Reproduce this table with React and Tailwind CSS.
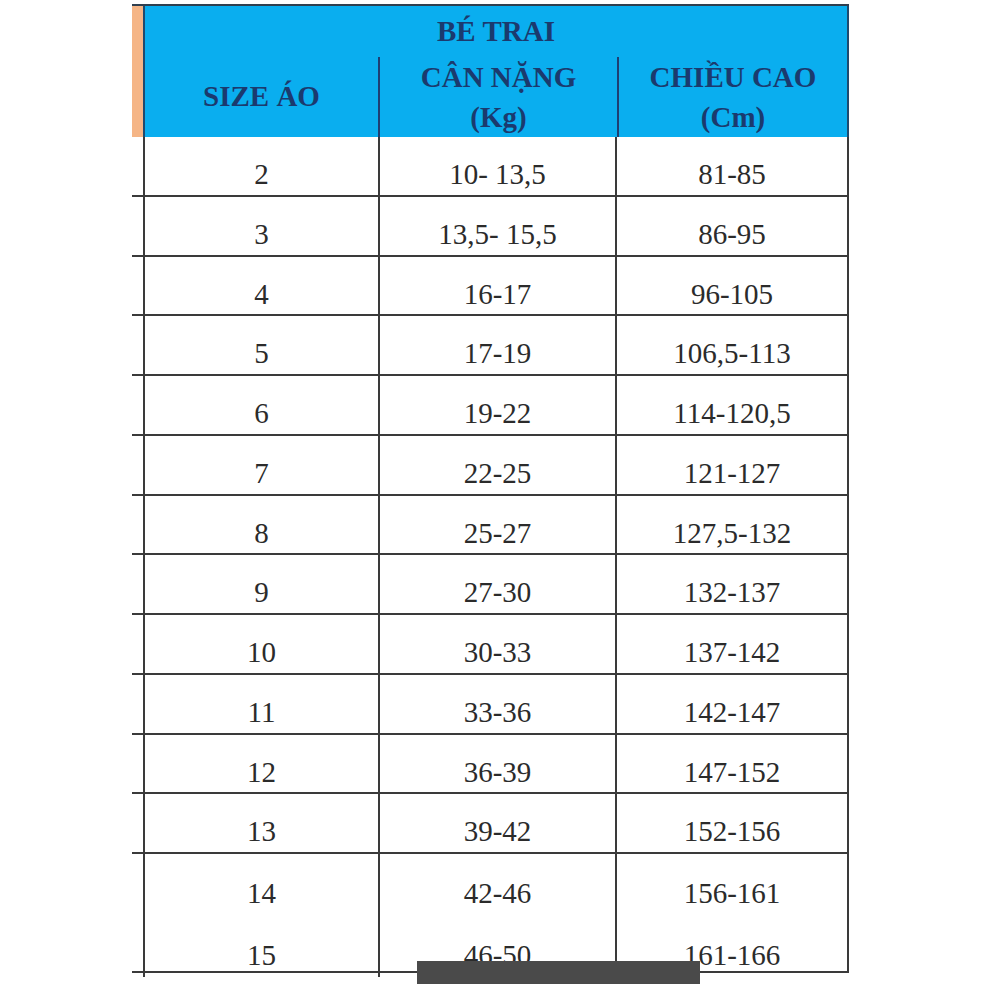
import React from 'react';

const rows = [
  ['2', '10- 13,5', '81-85'],
  ['3', '13,5- 15,5', '86-95'],
  ['4', '16-17', '96-105'],
  ['5', '17-19', '106,5-113'],
  ['6', '19-22', '114-120,5'],
  ['7', '22-25', '121-127'],
  ['8', '25-27', '127,5-132'],
  ['9', '27-30', '132-137'],
  ['10', '30-33', '137-142'],
  ['11', '33-36', '142-147'],
  ['12', '36-39', '147-152'],
  ['13', '39-42', '152-156'],
];

const lastRows = [
  ['14', '42-46', '156-161'],
  ['15', '46-50', '161-166'],
];

function Cells({ row }) {
  return (
    <>
      <div className="w-[235px] border-l-2 border-[#3a3a3a] flex items-center justify-center pt-[18px]">{row[0]}</div>
      <div className="w-[237px] border-l-2 border-[#3a3a3a] flex items-center justify-center pt-[18px]">{row[1]}</div>
      <div className="flex-1 border-l-2 border-[#3a3a3a] flex items-center justify-center pt-[18px]">{row[2]}</div>
    </>
  );
}

export default function App() {
  return (
    <div className="relative w-[984px] h-[984px] bg-white overflow-hidden pt-[4px] pl-[132px]" style={{ fontFamily: '"Liberation Serif", "Times New Roman", serif' }}>
      <div className="w-[717px] border-t-2 border-[#2f3f4f] text-[29px] text-[#2b2b2b]">
        {/* Header */}
        <div className="flex h-[131px]">
          <div className="w-[11px] bg-[#f5b586]" />
          <div className="flex-1 flex flex-col bg-[#0aaeef] border-l-2 border-r-2 border-[#1f4a6e] font-bold text-[#1b3a6e]">
            <div className="h-[51px] flex items-center justify-center">BÉ TRAI</div>
            <div className="flex-1 flex">
              <div className="w-[233px] flex items-center justify-center">SIZE ÁO</div>
              <div className="w-[239px] border-l-2 border-[#1e3f73] flex flex-col items-center justify-center leading-[40px]">
                <span>CÂN NẶNG</span>
                <span>(Kg)</span>
              </div>
              <div className="flex-1 border-l-2 border-[#1e3f73] flex flex-col items-center justify-center leading-[40px]">
                <span>CHIỀU CAO</span>
                <span>(Cm)</span>
              </div>
            </div>
          </div>
        </div>

        {/* Body */}
        {rows.map((row) => (
          <div key={row[0]} className="flex h-[59.75px] border-b-2 border-[#3a3a3a]">
            <div className="w-[11px]" />
            <div className="flex-1 flex border-r-2 border-[#3a3a3a]">
              <Cells row={row} />
            </div>
          </div>
        ))}
        <div className="flex h-[119px] border-b-2 border-[#3a3a3a]">
          <div className="w-[11px]" />
          <div className="flex-1 flex flex-col border-r-2 border-[#3a3a3a]">
            {lastRows.map((row) => (
              <div key={row[0]} className="flex flex-1">
                <Cells row={row} />
              </div>
            ))}
          </div>
        </div>
      </div>

      {/* dark bar over the bottom */}
      <div className="absolute left-[417px] top-[961px] w-[283px] h-[30px] bg-[#4a4a4a]" />
    </div>
  );
}
